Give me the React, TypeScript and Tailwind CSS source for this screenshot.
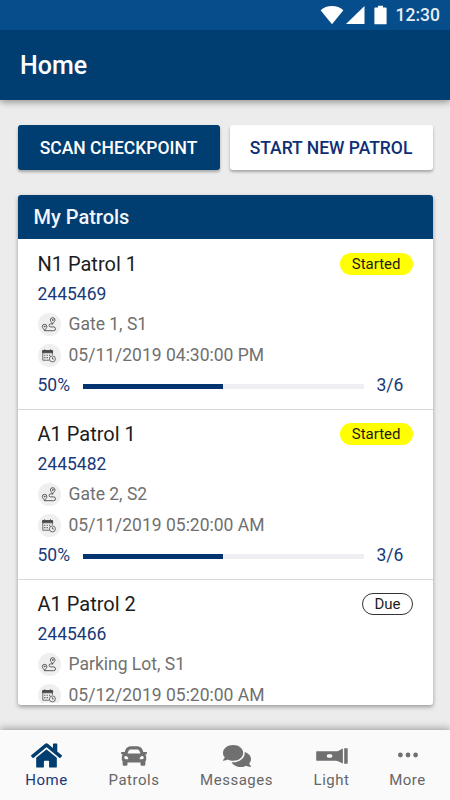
import { FaCar, FaComments, FaHome } from 'react-icons/fa';

interface Patrol {
    name: string;
    code: string;
    place: string;
    date: string;
    status: 'Started' | 'Due';
    done: number;
    total: number;
}

const patrols: Patrol[] = [
    { name: 'N1 Patrol 1', code: '2445469', place: 'Gate 1, S1', date: '05/11/2019 04:30:00 PM', status: 'Started', done: 3, total: 6 },
    { name: 'A1 Patrol 1', code: '2445482', place: 'Gate 2, S2', date: '05/11/2019 05:20:00 AM', status: 'Started', done: 3, total: 6 },
    { name: 'A1 Patrol 2', code: '2445466', place: 'Parking Lot, S1', date: '05/12/2019 05:20:00 AM', status: 'Due', done: 0, total: 6 },
];

function RouteIcon() {
    return (
        <svg width="16" height="16" viewBox="0 0 16 16" fill="none" stroke="#4a4a4a" strokeWidth=".9" strokeLinecap="round" strokeLinejoin="round">
            <path d="M11.7 6.6C10.2 4.9 9.4 4 9.4 3a2.3 2.3 0 0 1 4.6 0c0 1-.8 1.9-2.3 3.6z" />
            <circle cx="11.7" cy="3" r=".4" />
            <path d="M3.6 13.2C2.1 11.5 1.3 10.6 1.3 9.6a2.3 2.3 0 0 1 4.6 0c0 1-.8 1.9-2.3 3.6z" />
            <circle cx="3.6" cy="9.6" r=".4" />
            <path d="M11.7 6.9H9.6a1.5 1.5 0 0 0 0 3h3a1.9 1.9 0 0 1 0 3.8H3.8" />
        </svg>
    );
}

function ScheduleIcon() {
    return (
        <svg width="16" height="16" viewBox="0 0 16 16" fill="none" stroke="#4a4a4a" strokeWidth=".8">
            <path d="M8 12.2H1.8V2.8h9.6v4" />
            <path d="M1.6 2.5h10v2.3h-10z" fill="#4a4a4a" />
            <path d="M3.7 1.2v2M9.5 1.2v2" />
            <path d="M3.2 7.3h1.2M5.6 7.3h1.2M8 7.3h1.2M3.2 9.6h1.2M5.6 9.6h1.2" strokeWidth="1.1" />
            <circle cx="11.4" cy="10.9" r="3" fill="#efefef" />
            <path d="M11.4 9.2v1.8h1.4" />
        </svg>
    );
}

function FlashlightIcon() {
    return (
        <svg width="32" height="16" viewBox="0 0 32 16" fill="#707070">
            <path fillRule="evenodd" d="M1.2 3.3h18.6c2.5 0 4-1.5 7.1-2.9v15.2c-3.1-1.4-4.6-2.9-7.1-2.9H1.2C.5 12.7.2 12.3.2 11.7V4.3c0-.6.3-1 1-1zM12.4 6.3a1.7 1.7 0 0 0 0 3.4h2.3a1.7 1.7 0 0 0 0-3.4z" />
            <path d="M28.2.2h2.5c.7 0 1 .3 1 1v13.6c0 .7-.3 1-1 1h-2.5z" />
        </svg>
    );
}

function DotsIcon() {
    return (
        <svg width="22" height="6" viewBox="0 0 22 6" fill="#707070">
            <circle cx="3.4" cy="3" r="2.4" />
            <circle cx="11" cy="3" r="2.4" />
            <circle cx="18.6" cy="3" r="2.4" />
        </svg>
    );
}

function StatusBar() {
    return (
        <div className="z-10 flex h-[30px] shrink-0 items-center justify-end bg-[#054d8b] pr-[10px] text-white">
            <svg className="mr-[2px]" width="24" height="20" viewBox="0 0 24 20" fill="currentColor">
                <path d="M12 19.2.6 5.2C3.5 2.5 7.5 1 12 1s8.5 1.5 11.4 4.2z" />
            </svg>
            <svg className="mr-[9px]" width="19" height="20" viewBox="0 0 19 20" fill="currentColor">
                <path d="M18.5 1v18H0z" />
            </svg>
            <svg className="mr-[9px]" width="13" height="20" viewBox="0 0 13 20" fill="currentColor">
                <path d="M4 .8h5v1.7h2.7c.6 0 .9.3.9.9v15c0 .6-.3.9-.9.9H1.3c-.6 0-.9-.3-.9-.9v-15c0-.6.3-.9.9-.9H4z" />
            </svg>
            <span className="text-[17.5px] font-medium leading-[30px] text-[#e6edf4]">12:30</span>
        </div>
    );
}

function PatrolItem({ patrol }: { patrol: Patrol }) {
    const percent = Math.round((patrol.done / patrol.total) * 100);

    return (
        <div className="h-[170px] shrink-0 border-b border-[#d8d8d8] px-5 pt-[9px]">
            <div className="flex h-[30px] items-center justify-between">
                <h3 className="text-[20px] text-[#1c1c1c]">{patrol.name}</h3>
                <span
                    className={`flex h-[22px] items-center rounded-full text-[15px] text-[#1c1c1c] ${patrol.status === 'Started'
                            ? 'bg-[#ffff00] px-3'
                            : 'border border-[#333333] px-[11px]'
                        }`}
                >
                    {patrol.status}
                </span>
            </div>
            <p className="h-[30px] text-[17.5px] leading-[30px] text-[#1a3878]">{patrol.code}</p>
            <div className="flex h-[31px] items-center gap-2">
                <span className="flex size-[23px] items-center justify-center rounded-full bg-[#efefef]"><RouteIcon /></span>
                <span className="text-[17.5px] text-[#707070]">{patrol.place}</span>
            </div>
            <div className="flex h-[31px] items-center gap-2">
                <span className="flex size-[23px] items-center justify-center rounded-full bg-[#efefef]"><ScheduleIcon /></span>
                <span className="text-[17.5px] text-[#707070]">{patrol.date}</span>
            </div>
            {patrol.done > 0 && (
                <div className="flex h-[30px] items-center text-[17.5px] text-[#1a3878]">
                    <span className="mb-[2px] w-[45px]">{percent}%</span>
                    <div className="h-[5px] w-[281px] bg-[#eeeef3]">
                        <div className="h-full bg-[#04346f]" style={{ width: `${percent}%` }} />
                    </div>
                    <span className="mb-[2px] ml-[13px]">{patrol.done}/{patrol.total}</span>
                </div>
            )}
        </div>
    );
}

export default function App() {
    return (
        <div className="flex h-[800px] w-[450px] flex-col overflow-hidden bg-[#ececec] font-['Roboto',sans-serif]">
            <StatusBar />
            <header className="flex h-[70px] shrink-0 items-center bg-[#003d71] pl-5 shadow-[0_2px_7px_rgba(0,0,0,0.4)]">
                <h1 className="mt-[2px] text-[25px] font-medium text-white">Home</h1>
            </header>

            <main className="flex min-h-0 flex-1 flex-col pl-[17.5px] pr-[17.5px] pt-[25px]">
                <div className="flex h-[45px] shrink-0 gap-[10px] text-[17.5px] font-medium">
                    <button className="w-[202px] rounded-[3px] bg-[#003d71] pt-[2px] text-white shadow-[0_2px_3px_rgba(0,0,0,0.3)]">
                        SCAN CHECKPOINT
                    </button>
                    <button className="flex-1 rounded-[3px] bg-white pt-[2px] text-[#0f2f74] shadow-[0_2px_3px_rgba(0,0,0,0.3)]">
                        START NEW PATROL
                    </button>
                </div>

                <section className="mt-[25px] flex h-[510px] shrink-0 flex-col overflow-hidden rounded-[3px] bg-white shadow-[0_2px_4px_rgba(0,0,0,0.35)]">
                    <h2 className="h-[44px] shrink-0 bg-[#003d71] pl-4 text-[20px] font-medium leading-[44px] text-[#f2f5fb]">
                        My Patrols
                    </h2>
                    <div className="mb-[2px] flex min-h-0 flex-1 flex-col overflow-hidden pt-[1px]">
                        {patrols.map((patrol) => (
                            <PatrolItem key={patrol.code} patrol={patrol} />
                        ))}
                    </div>
                </section>
            </main>

            {/* Bottom navigation */}
            <nav className="flex h-[70px] shrink-0 bg-[#fafafa] text-[15px] tracking-[0.5px] text-[#666666] shadow-[0_-2px_7px_rgba(0,0,0,0.3)]">
                <a className="flex w-[93px] flex-col items-center pt-[10px] text-[#1a3878]">
                    <span className="flex h-[31px] items-center"><FaHome size={31} color="#003d71" /></span>
                    <span className="leading-[18px]">Home</span>
                </a>
                <a className="flex w-[82px] flex-col items-center pt-[10px]">
                    <span className="flex h-[31px] items-center"><FaCar size={26} color="#707070" /></span>
                    <span className="leading-[18px]">Patrols</span>
                </a>
                <a className="flex w-[123px] flex-col items-center pt-[10px]">
                    <span className="flex h-[31px] items-center"><FaComments size={28} color="#707070" /></span>
                    <span className="leading-[18px]">Messages</span>
                </a>
                <a className="flex w-[67px] flex-col items-center pt-[10px]">
                    <span className="flex h-[31px] items-center"><FlashlightIcon /></span>
                    <span className="leading-[18px]">Light</span>
                </a>
                <a className="flex w-[85px] flex-col items-center pt-[10px]">
                    <span className="flex h-[29px] items-center"><DotsIcon /></span>
                    <span className="mt-[2px] leading-[18px]">More</span>
                </a>
            </nav>
        </div>
    );
}
